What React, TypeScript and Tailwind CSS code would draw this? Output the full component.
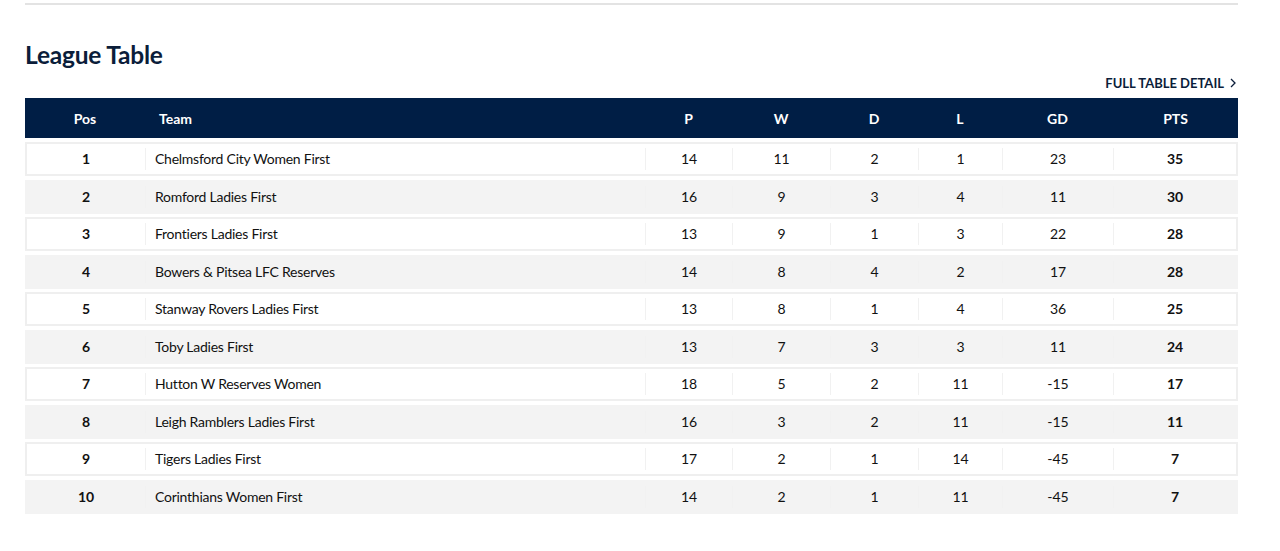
import React from 'react';

type Row = {
  pos: number;
  team: string;
  p: number;
  w: number;
  d: number;
  l: number;
  gd: number;
  pts: number;
};

const rows: Row[] = [
  { pos: 1, team: 'Chelmsford City Women First', p: 14, w: 11, d: 2, l: 1, gd: 23, pts: 35 },
  { pos: 2, team: 'Romford Ladies First', p: 16, w: 9, d: 3, l: 4, gd: 11, pts: 30 },
  { pos: 3, team: 'Frontiers Ladies First', p: 13, w: 9, d: 1, l: 3, gd: 22, pts: 28 },
  { pos: 4, team: 'Bowers & Pitsea LFC Reserves', p: 14, w: 8, d: 4, l: 2, gd: 17, pts: 28 },
  { pos: 5, team: 'Stanway Rovers Ladies First', p: 13, w: 8, d: 1, l: 4, gd: 36, pts: 25 },
  { pos: 6, team: 'Toby Ladies First', p: 13, w: 7, d: 3, l: 3, gd: 11, pts: 24 },
  { pos: 7, team: 'Hutton W Reserves Women', p: 18, w: 5, d: 2, l: 11, gd: -15, pts: 17 },
  { pos: 8, team: 'Leigh Ramblers Ladies First', p: 16, w: 3, d: 2, l: 11, gd: -15, pts: 11 },
  { pos: 9, team: 'Tigers Ladies First', p: 17, w: 2, d: 1, l: 14, gd: -45, pts: 7 },
  { pos: 10, team: 'Corinthians Women First', p: 14, w: 2, d: 1, l: 11, gd: -45, pts: 7 },
];

const Cell: React.FC<{ className?: string; children: React.ReactNode }> = ({ className = '', children }) => (
  <div className={`h-[22px] flex items-center border-l border-[#f1f1f1] ${className}`}>{children}</div>
);

const App: React.FC = () => {
  return (
    <div className="w-[1280px] bg-white font-['Lato',sans-serif] text-[#111]">
      <div className="ml-[25px] w-[1213px] pt-[3px]">
        <div className="h-[2px] bg-[#e3e3e3]" />

        <h2 className="mt-[34px] text-[24.5px] leading-[32px] font-bold text-[#0b1d3a] tracking-[-0.2px]">League Table</h2>

        <div className="mt-[4px] flex justify-end">
          <a className="flex items-center gap-[6px] text-[13px] leading-[16px] font-bold text-[#0b1d3a] uppercase pr-[2px]">
            Full Table Detail
            <svg width="6" height="10" viewBox="0 0 6 10" fill="none">
              <path d="M1 1l4 4-4 4" stroke="#0b1d3a" strokeWidth="1.3" />
            </svg>
          </a>
        </div>

        <div className="mt-[7px] h-[40px] bg-[#001e45] flex items-center text-white text-[14px] font-bold">
          <div className="w-[120px] text-center">Pos</div>
          <div className="w-[500px] pl-[14px]">Team</div>
          <div className="w-[87px] text-center">P</div>
          <div className="w-[98px] text-center">W</div>
          <div className="w-[88px] text-center">D</div>
          <div className="w-[84px] text-center">L</div>
          <div className="w-[111px] text-center">GD</div>
          <div className="w-[125px] text-center">PTS</div>
        </div>

        <div className="mt-[4px] flex flex-col gap-[3.5px] text-[14px] leading-[20px]">
          {rows.map((r, i) => (
            <div
              key={r.pos}
              className={`h-[34px] flex items-center border-2 ${
                i % 2 === 0 ? 'bg-white border-[#efefef]' : 'bg-[#f3f3f3] border-[#f3f3f3]'
              }`}
            >
              <div className="w-[118px] text-center font-bold">{r.pos}</div>
              <Cell className="w-[500px] pl-[9px] tracking-[-0.25px]">{r.team}</Cell>
              <Cell className="w-[87px] justify-center">{r.p}</Cell>
              <Cell className="w-[98px] justify-center">{r.w}</Cell>
              <Cell className="w-[88px] justify-center">{r.d}</Cell>
              <Cell className="w-[84px] justify-center">{r.l}</Cell>
              <Cell className="w-[111px] justify-center">{r.gd}</Cell>
              <Cell className="w-[123px] justify-center font-bold">{r.pts}</Cell>
            </div>
          ))}
        </div>
      </div>
    </div>
  );
};

export default App;
